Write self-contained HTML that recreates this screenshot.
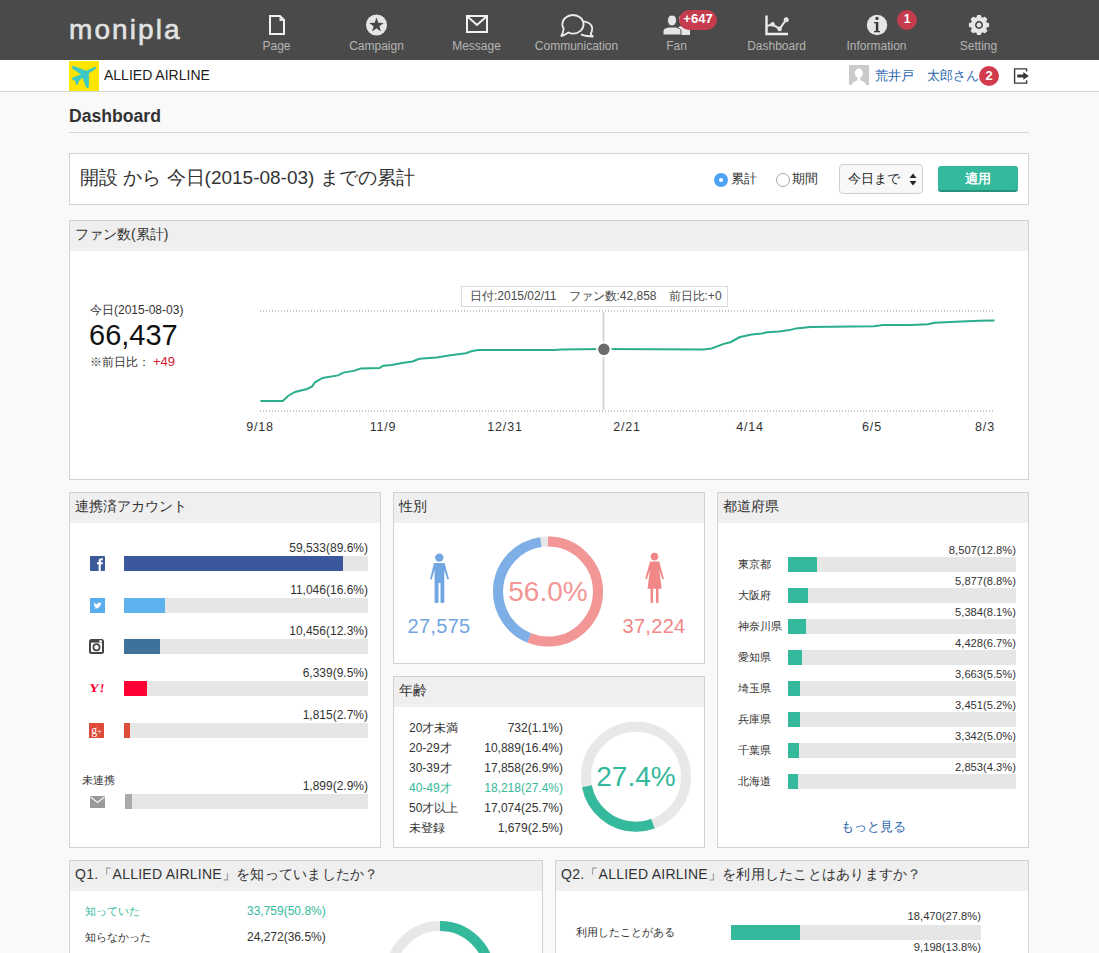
<!DOCTYPE html>
<html><head><meta charset="utf-8">
<style>
*{margin:0;padding:0;box-sizing:border-box}
html,body{width:1099px;height:953px;overflow:hidden;background:#f9f9f9;font-family:"Liberation Sans",sans-serif;color:#333}
.a{position:absolute;white-space:nowrap}
#hd{position:absolute;left:0;top:0;width:1099px;height:60px;background:#4a4a4a}
.logo{position:absolute;left:69px;top:16px;line-height:28px;font-size:28px;font-weight:normal;color:#e2e2e2;letter-spacing:2.1px;-webkit-text-stroke:0.6px #e2e2e2}
.lb{position:absolute;top:39px;width:120px;margin-left:-59.5px;text-align:center;font-size:12px;color:#b4b4b4;white-space:nowrap}
.badge{position:absolute;background:#c43c4e;color:#fff;font-weight:bold;font-size:13px;border-radius:10px;height:20px;line-height:18px;text-align:center}
#sub{position:absolute;left:0;top:60px;width:1099px;height:32px;background:#fff;border-bottom:1px solid #d5d5d5}
.box{position:absolute;background:#fff;border:1px solid #d2d2d2}
.bh{position:absolute;left:0;top:0;right:0;height:30px;background:#efefef;font-size:14px;line-height:27px;padding-left:5px;color:#333}
.s12{font-size:12px;color:#333}
.bar{position:absolute;height:15px;background:#e6e6e6}
.bar i{position:absolute;left:0;top:0;bottom:0;display:block}
.val{position:absolute;font-size:12px;color:#333;text-align:right;white-space:nowrap}
.xl{position:absolute;top:420px;font-size:12.5px;letter-spacing:0.8px;color:#333;width:60px;margin-left:-30px;text-align:center}
</style></head><body>
<div id="hd">
  <div class="logo">monipla</div>
  <svg class="a" style="left:0;top:0" width="1099" height="60">
    <!-- Page -->
    <path d="M270,16 H280 L284,20 V34 H270 Z" fill="none" stroke="#f2f2f2" stroke-width="2"/>
    <path d="M279.5,16 V21 H284 Z" fill="#e0e0e0"/>
    <!-- Campaign -->
    <circle cx="376.5" cy="25" r="10.5" fill="#e6e6e6"/>
    <path d="M376.5,17.6 L378.3,22.8 L383.7,22.9 L379.4,26.2 L380.9,31.4 L376.5,28.3 L372.1,31.4 L373.6,26.2 L369.3,22.9 L374.7,22.8 Z" fill="#474747"/>
    <!-- Message -->
    <rect x="467" y="16" width="20" height="16" fill="none" stroke="#f2f2f2" stroke-width="2"/>
    <path d="M468,17 L477,25 L486,17" fill="none" stroke="#f2f2f2" stroke-width="2"/>
    <!-- Communication -->
    <path d="M568.4,32.5 C570,33.3 571.5,33.6 573,33.6 C578.9,33.6 583.6,29.4 583.6,24.3 C583.6,19.2 578.9,15 573,15 C567.1,15 562.3,19.2 562.3,24.3 C562.3,25.9 562.8,27.4 563.7,28.6 C563.5,31 562.5,34 561.3,36 C563.8,35.5 566.3,34 568.4,32.5 Z" fill="none" stroke="#ebebeb" stroke-width="1.8" stroke-linejoin="round"/>
    <path d="M584.1,21.3 C588.7,22.2 592.2,25 592.2,28.6 C592.2,30.5 591.7,32.3 590.7,33.6 C591.2,34.6 592,35.7 592.8,36.5 C590.8,36.4 588.6,36.2 586.7,36 C584.6,35.8 582.7,35.2 581,34.4" fill="none" stroke="#ebebeb" stroke-width="1.8" stroke-linejoin="round"/>
    <!-- Fan -->
    <path d="M683,24 C686,24 687,21 687,19 C687,16.5 685.5,15 683,15 C680.5,15 679,16.5 679,19 C679,21 680,24 683,24 Z M676,35 L690,35 L690,30 C690,28 688,27 685,26 L681,26 C678,27 676,28 676,30 Z" fill="#e6e6e6"/>
    <path d="M672,26 C675,26 676.5,23 676.5,20.5 C676.5,17 675,15 672,15 C669,15 667.5,17 667.5,20.5 C667.5,23 669,26 672,26 Z M663,35 L681,35 L681,31 C681,29 679,28 675.5,27 L668.5,27 C665,28 663,29 663,31 Z" fill="#e6e6e6" stroke="#4a4a4a" stroke-width="1"/>
    <!-- Dashboard -->
    <path d="M766.5,15.5 V34 H788" fill="none" stroke="#eeeeee" stroke-width="2.4"/>
    <path d="M767,26 L772.6,24.4 L779.6,28.9 L786.2,19.7" fill="none" stroke="#e6e6e6" stroke-width="2"/>
    <circle cx="772.6" cy="24.4" r="2.3" fill="#e6e6e6"/>
    <circle cx="779.6" cy="28.9" r="2.3" fill="#e6e6e6"/>
    <circle cx="786.2" cy="19.7" r="2.5" fill="#e6e6e6"/>
    <!-- Information -->
    <circle cx="877" cy="25" r="10.2" fill="#e6e6e6"/>
    <circle cx="877" cy="18.4" r="1.6" fill="#3a3a3a"/>
    <path d="M874,22 H878.3 V31 H880 V32.2 H874 V31 H875.8 V23.2 H874 Z" fill="#3a3a3a"/>
    <!-- Setting -->
    <g transform="translate(979,25)">
      <path id="gear" d="M-1.97,-7.34 L-1.34,-9.51 L1.34,-9.51 L1.97,-7.34 L3.80,-6.58 L5.78,-7.67 L7.67,-5.78 L6.58,-3.80 L7.34,-1.97 L9.51,-1.34 L9.51,1.34 L7.34,1.97 L6.58,3.80 L7.67,5.78 L5.78,7.67 L3.80,6.58 L1.97,7.34 L1.34,9.51 L-1.34,9.51 L-1.97,7.34 L-3.80,6.58 L-5.78,7.67 L-7.67,5.78 L-6.58,3.80 L-7.34,1.97 L-9.51,1.34 L-9.51,-1.34 L-7.34,-1.97 L-6.58,-3.80 L-7.67,-5.78 L-5.78,-7.67 L-3.80,-6.58 Z" stroke="#e6e6e6" stroke-width="1.2" stroke-linejoin="round" fill="#e6e6e6"/>
      <circle r="3.2" fill="none" stroke="#3a3a3a" stroke-width="1.5"/>
    </g>
  </svg>
  <div class="lb" style="left:276px">Page</div>
  <div class="lb" style="left:376px">Campaign</div>
  <div class="lb" style="left:476px">Message</div>
  <div class="lb" style="left:576px">Communication</div>
  <div class="lb" style="left:676px">Fan</div>
  <div class="lb" style="left:776px">Dashboard</div>
  <div class="lb" style="left:876px">Information</div>
  <div class="lb" style="left:978px">Setting</div>
  <div class="badge" style="left:679px;top:10px;width:38px">+647</div>
  <div class="badge" style="left:897px;top:10px;width:20px;font-size:12px">1</div>
</div>
<div id="sub">
  <div class="a" style="left:69px;top:1px;width:30px;height:30px;background:#ffe600"></div>
  <svg class="a" style="left:69px;top:1px" width="30" height="30" viewBox="0 0 30 30">
    <path d="M26.3,6 L17.3,10.1 L4.2,5.2 C3.2,5.2 2.8,6.3 3.6,7.4 L12.5,13.4 L3.8,17 C3,17.5 3,18.7 4.2,19 L6.5,19.3 L7.3,23.3 C7.5,23.8 8.1,23.8 8.3,23.3 L10.3,18.7 L13.8,16.6 L17.2,25.8 C17.6,26.8 19.3,26.8 19.5,25.7 L19.6,12.3 L26,8 C27,7.5 27.2,6.2 26.3,6 Z" fill="#3cc9c4" stroke="#3cc9c4" stroke-width="0.8" stroke-linejoin="round"/>
  </svg>
  <div class="a" style="left:104px;top:7px;font-size:14px;color:#222">ALLIED AIRLINE</div>
  <div class="a" style="left:849px;top:5px;width:20px;height:20px;background:#cbcbcb;overflow:hidden">
    <svg width="20" height="20"><ellipse cx="9.8" cy="8.1" rx="4.1" ry="4.5" fill="#fff"/><path d="M2.6,20 C3.3,17.2 5.8,16.2 8.3,15.6 L8.6,11.5 H11.1 L11.4,15.6 C14,16.2 16.4,17.2 17.2,20 Z" fill="#fff"/></svg>
  </div>
  <div class="a" style="left:875px;top:7px;font-size:13px;color:#2a66ad">荒井戸　太郎さん</div>
  <div class="a" style="left:979px;top:6px;width:20px;height:20px;border-radius:50%;background:#d23b4e;color:#fff;font-weight:bold;font-size:13px;line-height:20px;text-align:center">2</div>
  <svg class="a" style="left:1013px;top:8px" width="17" height="17">
    <path d="M13.6,3.4 V0.9 H1.6 V15.1 H13.6 V12.3" fill="none" stroke="#3a3a3a" stroke-width="1.4"/>
    <path d="M4.2,6.4 H10.3 V3.9 L15.9,8 L10.3,11.7 V9.6 H4.2 Z" fill="#3a3a3a"/>
  </svg>
</div>
<div class="a" style="left:69px;top:106px;font-size:17.6px;font-weight:bold;color:#333">Dashboard</div>
<div class="a" style="left:69px;top:132px;width:960px;height:1px;background:#d5d5d5"></div>

<!-- period box -->
<div class="box" style="left:69px;top:153px;width:960px;height:52px"></div>
<div class="a" style="left:80px;top:165px;font-size:19px;color:#333">開設 から 今日(2015-08-03) までの累計</div>
<div class="a" style="left:714px;top:173px;width:14px;height:14px;border-radius:50%;background:#4ea2f3"></div>
<div class="a" style="left:719px;top:178px;width:4px;height:4px;border-radius:50%;background:#fff"></div>
<div class="a" style="left:731px;top:170px;font-size:13px;color:#333">累計</div>
<div class="a" style="left:776px;top:173px;width:14px;height:14px;border-radius:50%;background:#fff;border:1px solid #a8a8a8"></div>
<div class="a" style="left:792px;top:170px;font-size:13px;color:#333">期間</div>
<div class="a" style="left:839px;top:164px;width:84px;height:30px;border:1px solid #cfcfcf;border-radius:4px;background:#f8f8f8"></div>
<div class="a" style="left:848px;top:170px;font-size:13px;color:#222">今日まで</div>
<svg class="a" style="left:909px;top:173px" width="8" height="13"><path d="M0.5,5 L4,0.5 L7.5,5 Z M0.5,8 L4,12.5 L7.5,8 Z" fill="#222"/></svg>
<div class="a" style="left:938px;top:166px;width:80px;height:26px;border-radius:3px;background:#35b99c;border-bottom:2px solid #27917a;color:#fff;font-weight:bold;font-size:13px;line-height:25px;text-align:center">適用</div>

<!-- fan chart -->
<div class="box" style="left:69px;top:220px;width:960px;height:260px"><div class="bh">ファン数(累計)</div></div>
<div class="a s12" style="left:90px;top:302px">今日(2015-08-03)</div>
<div class="a" style="left:89px;top:319px;font-size:29px;color:#111">66,437</div>
<div class="a s12" style="left:90px;top:354px">※前日比：<span style="color:#d0152c;margin-left:3px;font-size:13px">+49</span></div>
<svg class="a" style="left:0;top:0" width="1099" height="480">
  <line x1="260" y1="311" x2="995" y2="311" stroke="#c8c8c8" stroke-width="2" stroke-dasharray="1,2"/>
  <line x1="260" y1="411" x2="995" y2="411" stroke="#c8c8c8" stroke-width="2" stroke-dasharray="1,2"/>
  <line x1="603.5" y1="312" x2="603.5" y2="410" stroke="#d6d6d6" stroke-width="2"/>
  <path d="M260.4,401.0 L282.8,401.0 L288.0,396.0 L295.0,392.0 L307.0,389.0 L312.2,386.4 L315.0,382.3 L322.6,378.0 L338.0,375.4 L343.4,372.6 L353.7,370.9 L360.6,368.5 L379.7,368.1 L383.0,365.7 L391.8,365.0 L402.0,363.0 L412.5,361.5 L419.4,358.8 L436.7,357.4 L450.5,355.3 L466.0,353.2 L471.3,351.2 L478.2,350.1 L554.3,350.1 L561.2,349.4 L603.4,349.1 L703.0,349.4 L711.6,348.4 L723.7,343.9 L730.6,342.2 L739.3,337.3 L751.4,334.6 L761.8,333.5 L767.0,332.2 L779.0,331.5 L789.4,330.1 L796.3,328.4 L810.2,327.0 L874.1,326.3 L882.8,324.9 L910.5,324.9 L927.7,324.2 L934.7,322.8 L955.4,321.8 L979.6,320.7 L994.5,320.4" fill="none" stroke="#2aae8c" stroke-width="2"/>
  <circle cx="603.9" cy="349.3" r="6.8" fill="#6b6b6b" stroke="#fff" stroke-width="2"/>
</svg>
<div class="a" style="left:461px;top:286px;width:267px;height:21px;border:1px solid #dcdcdc;background:#fff;font-size:12px;color:#4a4a4a;line-height:19px;padding-left:8px">日付:2015/02/11　ファン数:42,858　前日比:+0</div>
<div class="xl" style="left:260px">9/18</div>
<div class="xl" style="left:383px">11/9</div>
<div class="xl" style="left:505px">12/31</div>
<div class="xl" style="left:627px">2/21</div>
<div class="xl" style="left:750px">4/14</div>
<div class="xl" style="left:872px">6/5</div>
<div class="xl" style="left:985px">8/3</div>

<!-- accounts -->
<div class="box" style="left:69px;top:492px;width:312px;height:356px"><div class="bh">連携済アカウント</div></div>
<div class="val" style="left:200px;width:168px;top:541px">59,533(89.6%)</div>
<div class="bar" style="left:124px;top:556px;width:244px"><i style="width:219px;background:#3b579d"></i></div>
<svg class="a" style="left:90px;top:556px" width="15" height="15"><rect width="15" height="15" rx="1" fill="#3b5998"/><path d="M8.6,15 V8.3 H7 V6.3 H8.6 V5 C8.6,3 9.7,2.2 11.3,2.2 C12,2.2 12.6,2.3 12.9,2.3 V4.2 H11.9 C11.1,4.2 10.8,4.6 10.8,5.3 V6.3 H12.9 L12.6,8.3 H10.8 V15 Z" fill="#fff"/></svg>
<div class="val" style="left:200px;width:168px;top:583px">11,046(16.6%)</div>
<div class="bar" style="left:124px;top:598px;width:244px"><i style="width:41px;background:#5fb1ee"></i></div>
<div class="a" style="left:90px;top:598px;width:15px;height:15px;background:#5aaeee"></div>
<svg class="a" style="left:90px;top:598px" width="15" height="15"><path d="M3.5,10 C6,11 9.5,10.5 10.8,6.3 L11.8,5.3 L10.8,5.5 L11.3,4.6 L10.2,5 C9.5,4.2 8,4.3 7.6,5.5 L7.6,6.3 C6,6.2 4.8,5.5 4,4.6 C3.6,5.5 4,6.6 4.7,7 L4,6.9 C4.1,7.8 4.7,8.3 5.4,8.5 L4.6,8.6 C5,9.3 5.6,9.5 6.2,9.6 C5.5,10 4.5,10.2 3.5,10 Z" fill="#fff"/></svg>
<div class="val" style="left:200px;width:168px;top:624px">10,456(12.3%)</div>
<div class="bar" style="left:124px;top:639px;width:244px"><i style="width:36px;background:#3f729b"></i></div>
<svg class="a" style="left:89px;top:639px" width="15" height="15"><rect x="0" y="0" width="15" height="15" rx="2.5" fill="#454545"/><rect x="2" y="3.6" width="11" height="9.4" fill="#fff"/><circle cx="7.5" cy="8.3" r="3.1" fill="none" stroke="#454545" stroke-width="1.7"/><circle cx="11.6" cy="2.3" r="1.3" fill="#fff"/></svg>
<div class="val" style="left:200px;width:168px;top:666px">6,339(9.5%)</div>
<div class="bar" style="left:124px;top:681px;width:244px"><i style="width:23px;background:#ff0033"></i></div>
<div class="a" style="left:90px;top:681px;font-family:'Liberation Serif',serif;font-weight:bold;font-size:12px;color:#ff0033;letter-spacing:0.3px;transform:scaleX(1.2) skewX(-6deg);transform-origin:0 0">Y!</div>
<div class="val" style="left:200px;width:168px;top:708px">1,815(2.7%)</div>
<div class="bar" style="left:124px;top:723px;width:244px"><i style="width:6px;background:#dd4b39"></i></div>
<div class="a" style="left:89px;top:723px;width:15px;height:15px;background:#dd4b39;color:#fff;font-family:'Liberation Serif',serif;font-size:12px;line-height:15px;text-align:center">g<span style="font-size:8px">+</span></div>
<div class="a" style="left:82px;top:773px;font-size:11px;color:#333">未連携</div>
<div class="val" style="left:200px;width:168px;top:779px">1,899(2.9%)</div>
<div class="bar" style="left:125px;top:794px;width:243px"><i style="width:7px;background:#ababab"></i></div>
<svg class="a" style="left:90px;top:796px" width="15" height="12"><rect width="15" height="12" fill="#999"/><path d="M0.5,1 L7.5,6.5 L14.5,1" fill="none" stroke="#f4f4f4" stroke-width="1.3"/></svg>

<!-- gender -->
<div class="box" style="left:393px;top:492px;width:312px;height:172px"><div class="bh">性別</div></div>
<svg class="a" style="left:393px;top:492px" width="312" height="172">
  <g transform="translate(-393,-492)">
  <circle cx="439.3" cy="557.6" r="4.2" fill="#72a6e2"/>
  <path d="M434,563 H444.6 L448.8,578.5 C449,579.5 447.5,580 447.2,579 L444.3,570 V602 C444.3,603 443,603 442.5,603 H441.5 C440.8,603 440.5,602.5 440.5,602 V583 H438.5 V602 C438.5,602.5 438.2,603 437.5,603 H436 C435,603 434.6,602.5 434.6,602 V570 L431.8,579 C431.5,580 430,579.5 430.2,578.5 Z" fill="#72a6e2"/>
  <circle cx="654.5" cy="556.6" r="3.8" fill="#f18787"/>
  <path d="M650,561.4 H659.2 L663.8,578.3 C664,579.3 662.5,579.8 662.2,578.8 L659.3,570 L661.7,588.7 H658.5 V602 C658.5,602.8 658,603 657.5,603 H656.7 C656.2,603 656,602.8 656,602 V588.7 H653 V602 C653,602.8 652.8,603 652.3,603 H651.5 C651,603 650.5,602.8 650.5,602 V588.7 H647.5 L649.9,570 L647,578.8 C646.7,579.8 645.2,579.3 645.4,578.3 Z" fill="#f18787"/>
  <g transform="rotate(-90 548 591.6)">
    <circle cx="548" cy="591.6" r="50" fill="none" stroke="#e8e8e8" stroke-width="10"/>
    <circle cx="548" cy="591.6" r="50" fill="none" stroke="#f39696" stroke-width="10" stroke-dasharray="176.03 400"/>
    <circle cx="548" cy="591.6" r="50" fill="none" stroke="#7daee6" stroke-width="10" stroke-dasharray="0 176.03 130.38 400"/>
  </g>
  </g>
</svg>
<div class="a" style="left:393px;top:576px;width:310px;text-align:center;font-size:28px;color:#f39696;padding-left:0">56.0%</div>
<div class="a" style="left:389px;top:615px;width:100px;text-align:center;font-size:20px;letter-spacing:0.3px;color:#72a6e2">27,575</div>
<div class="a" style="left:604px;top:615px;width:100px;text-align:center;font-size:20px;letter-spacing:0.3px;color:#f18787">37,224</div>

<!-- age -->
<div class="box" style="left:393px;top:676px;width:312px;height:172px"><div class="bh">年齢</div></div>
<div class="a s12" style="left:409px;top:720px;line-height:16px">20才未満<br></div>
<div class="a s12" style="left:409px;top:740px;line-height:16px">20-29才</div>
<div class="a s12" style="left:409px;top:760px;line-height:16px">30-39才</div>
<div class="a s12" style="left:409px;top:780px;line-height:16px;color:#35b99c">40-49才</div>
<div class="a s12" style="left:409px;top:800px;line-height:16px">50才以上</div>
<div class="a s12" style="left:409px;top:820px;line-height:16px">未登録</div>
<div class="val" style="left:460px;width:103px;top:720px;line-height:16px">732(1.1%)</div>
<div class="val" style="left:460px;width:103px;top:740px;line-height:16px">10,889(16.4%)</div>
<div class="val" style="left:460px;width:103px;top:760px;line-height:16px">17,858(26.9%)</div>
<div class="val" style="left:460px;width:103px;top:780px;line-height:16px;color:#35b99c">18,218(27.4%)</div>
<div class="val" style="left:460px;width:103px;top:800px;line-height:16px">17,074(25.7%)</div>
<div class="val" style="left:460px;width:103px;top:820px;line-height:16px">1,679(2.5%)</div>
<svg class="a" style="left:0;top:0" width="1099" height="953">
  <g transform="rotate(-90 636 776.7)">
    <circle cx="636" cy="776.7" r="50" fill="none" stroke="#e8e8e8" stroke-width="10"/>
    <circle cx="636" cy="776.7" r="50" fill="none" stroke="#35b99c" stroke-width="10" stroke-dasharray="0 139.49 86.08 400"/>
  </g>

</svg>
<div class="a" style="left:586px;top:761px;width:100px;text-align:center;font-size:28px;color:#35b99c">27.4%</div>

<!-- prefectures -->
<div class="box" style="left:717px;top:492px;width:312px;height:356px"><div class="bh">都道府県</div></div>
<div class="a s12" style="left:738px;top:557px;line-height:15px;font-size:11px">東京都</div>
<div class="val" style="left:850px;width:166px;top:544px;font-size:11.2px">8,507(12.8%)</div>
<div class="bar" style="left:788px;top:557px;width:228px"><i style="width:29px;background:#35b99c"></i></div>
<div class="a s12" style="left:738px;top:588px;line-height:15px;font-size:11px">大阪府</div>
<div class="val" style="left:850px;width:166px;top:575px;font-size:11.2px">5,877(8.8%)</div>
<div class="bar" style="left:788px;top:588px;width:228px"><i style="width:20px;background:#35b99c"></i></div>
<div class="a s12" style="left:738px;top:619px;line-height:15px;font-size:11px">神奈川県</div>
<div class="val" style="left:850px;width:166px;top:606px;font-size:11.2px">5,384(8.1%)</div>
<div class="bar" style="left:788px;top:619px;width:228px"><i style="width:18px;background:#35b99c"></i></div>
<div class="a s12" style="left:738px;top:650px;line-height:15px;font-size:11px">愛知県</div>
<div class="val" style="left:850px;width:166px;top:637px;font-size:11.2px">4,428(6.7%)</div>
<div class="bar" style="left:788px;top:650px;width:228px"><i style="width:14px;background:#35b99c"></i></div>
<div class="a s12" style="left:738px;top:681px;line-height:15px;font-size:11px">埼玉県</div>
<div class="val" style="left:850px;width:166px;top:668px;font-size:11.2px">3,663(5.5%)</div>
<div class="bar" style="left:788px;top:681px;width:228px"><i style="width:12px;background:#35b99c"></i></div>
<div class="a s12" style="left:738px;top:712px;line-height:15px;font-size:11px">兵庫県</div>
<div class="val" style="left:850px;width:166px;top:699px;font-size:11.2px">3,451(5.2%)</div>
<div class="bar" style="left:788px;top:712px;width:228px"><i style="width:12px;background:#35b99c"></i></div>
<div class="a s12" style="left:738px;top:743px;line-height:15px;font-size:11px">千葉県</div>
<div class="val" style="left:850px;width:166px;top:730px;font-size:11.2px">3,342(5.0%)</div>
<div class="bar" style="left:788px;top:743px;width:228px"><i style="width:11px;background:#35b99c"></i></div>
<div class="a s12" style="left:738px;top:774px;line-height:15px;font-size:11px">北海道</div>
<div class="val" style="left:850px;width:166px;top:761px;font-size:11.2px">2,853(4.3%)</div>
<div class="bar" style="left:788px;top:774px;width:228px"><i style="width:10px;background:#35b99c"></i></div>
<div class="a" style="left:841px;top:818px;font-size:13px;color:#2a66ad">もっと見る</div>

<!-- Q1 -->
<div class="box" style="left:69px;top:860px;width:474px;height:120px"><div class="bh" style="letter-spacing:0.25px">Q1.「ALLIED AIRLINE」を知っていましたか？</div></div>
<div class="a s12" style="left:85px;top:904px;font-size:11px;color:#35b99c">知っていた</div>
<div class="a s12" style="left:247px;top:904px;color:#35b99c">33,759(50.8%)</div>
<div class="a s12" style="left:85px;top:930px;font-size:11px">知らなかった</div>
<div class="a s12" style="left:247px;top:930px">24,272(36.5%)</div>

<svg class="a" style="left:0;top:0" width="1099" height="953">
  <g transform="rotate(-90 440 976)">
    <circle cx="440" cy="976" r="50" fill="none" stroke="#e8e8e8" stroke-width="10"/>
    <circle cx="440" cy="976" r="50" fill="none" stroke="#35b99c" stroke-width="10" stroke-dasharray="159.59 400"/>
  </g>
</svg>
<!-- Q2 -->
<div class="box" style="left:555px;top:860px;width:474px;height:120px"><div class="bh" style="letter-spacing:0.25px">Q2.「ALLIED AIRLINE」を利用したことはありますか？</div></div>
<div class="a s12" style="left:576px;top:925px;font-size:11px">利用したことがある</div>
<div class="val" style="left:830px;width:151px;top:910px;font-size:11.2px">18,470(27.8%)</div>
<div class="bar" style="left:731px;top:925px;width:250px"><i style="width:69px;background:#35b99c"></i></div>
<div class="val" style="left:830px;width:151px;top:941px;font-size:11.2px">9,198(13.8%)</div>
</body></html>
